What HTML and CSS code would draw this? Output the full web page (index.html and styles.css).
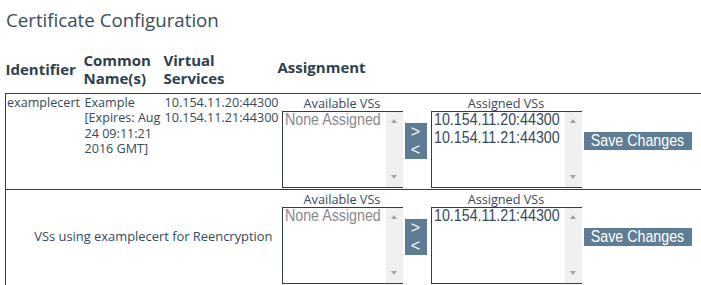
FILE: index.html
```html
<!DOCTYPE html>
<html>
<head>
<meta charset="utf-8">
<link rel="stylesheet" href="styles.css">
</head>
<body>
<div class="page">
  <h1 class="title">Certificate Configuration</h1>
  <table class="certs">
    <colgroup>
      <col class="c-id">
      <col class="c-cn">
      <col class="c-vs">
      <col class="c-as">
    </colgroup>
    <thead>
      <tr>
        <th>Identifier</th>
        <th>Common<br>Name(s)</th>
        <th>Virtual<br>Services</th>
        <th class="th-assign">Assignment</th>
      </tr>
    </thead>
    <tbody>
      <tr>
        <td class="first">examplecert</td>
        <td>Example<br>[Expires: Aug 24 09:11:21 2016 GMT]</td>
        <td>10.154.11.20:44300<br>10.154.11.21:44300</td>
        <td class="assign">
          <div class="assign-row">
            <div class="pick pick-avail">
              <div class="pick-label">Available VSs</div>
              <div class="listbox">
                <div class="options"><div class="opt opt-empty"><span class="opt-text">None Assigned</span></div></div>
                <div class="scrollbar"><span class="arr-up"></span><span class="arr-down"></span></div>
              </div>
            </div>
            <div class="movers">
              <button class="mover">&gt;</button>
              <button class="mover">&lt;</button>
            </div>
            <div class="pick pick-assigned">
              <div class="pick-label">Assigned VSs</div>
              <div class="listbox">
                <div class="options">
                  <div class="opt"><span class="opt-text">10.154.11.20:44300</span></div>
                  <div class="opt"><span class="opt-text">10.154.11.21:44300</span></div>
                </div>
                <div class="scrollbar"><span class="arr-up"></span><span class="arr-down"></span></div>
              </div>
            </div>
            <button class="save"><span class="save-text">Save Changes</span></button>
          </div>
        </td>
      </tr>
      <tr>
        <td colspan="3" class="first reenc">VSs using examplecert for Reencryption</td>
        <td class="assign">
          <div class="assign-row">
            <div class="pick pick-avail">
              <div class="pick-label">Available VSs</div>
              <div class="listbox">
                <div class="options"><div class="opt opt-empty"><span class="opt-text">None Assigned</span></div></div>
                <div class="scrollbar"><span class="arr-up"></span><span class="arr-down"></span></div>
              </div>
            </div>
            <div class="movers">
              <button class="mover">&gt;</button>
              <button class="mover">&lt;</button>
            </div>
            <div class="pick pick-assigned">
              <div class="pick-label">Assigned VSs</div>
              <div class="listbox">
                <div class="options">
                  <div class="opt"><span class="opt-text">10.154.11.21:44300</span></div>
                </div>
                <div class="scrollbar"><span class="arr-up"></span><span class="arr-down"></span></div>
              </div>
            </div>
            <button class="save"><span class="save-text">Save Changes</span></button>
          </div>
        </td>
      </tr>
    </tbody>
  </table>
</div>
</body>
</html>
```
FILE: styles.css
```css
html, body {
  margin: 0;
  padding: 0;
  background: #ffffff;
  overflow: hidden;
}
body {
  font-family: "Open Sans", "Noto Sans", sans-serif;
  color: #34495e;
}
.page {
  padding: 0 0 0 5px;
}
.title {
  margin: 0;
  padding: 8px 0 0 1px;
  height: 24px;
  font-size: 18.7px;
  line-height: 24px;
  font-weight: normal;
  color: #3b4b5c;
}
.certs {
  width: 100%;
  border-collapse: collapse;
  table-layout: fixed;
}
.c-id { width: 78px; }
.c-cn { width: 80px; }
.c-vs { width: 114px; }
.certs thead tr {
  height: 61px;
}
.certs thead th {
  text-align: left;
  vertical-align: middle;
  font-size: 15px;
  line-height: 18px;
  font-weight: bold;
  color: #2f3e4e;
  padding: 14px 0 0 0;
  white-space: nowrap;
}
.certs thead th.th-assign {
  padding-left: 0;
  padding-bottom: 5px;
}
.certs tbody tr {
  border-top: 1px solid #2f3e4e;
}
.certs tbody td {
  vertical-align: top;
  font-size: 12.6px;
  line-height: 15.5px;
  padding: 1px 0 1px 1px;
  color: #34495e;
}
.certs tbody td.first {
  border-left: 1px solid #2f3e4e;
}
.certs tbody td.reenc {
  text-align: right;
  vertical-align: middle;
  font-size: 12.9px;
  padding-right: 5px;
  padding-top: 1px;
}
.certs tbody td.assign {
  padding: 1px 0 1px 4px;
}
.assign-row {
  display: flex;
  align-items: center;
}
.pick {
  display: flex;
  flex-direction: column;
}
.pick-avail { width: 121px; }
.pick-assigned { width: 151px; margin-left: 4px; }
.pick-label {
  text-align: center;
  font-size: 12.7px;
  line-height: 16px;
  height: 16px;
  color: #34495e;
}
.listbox {
  display: flex;
  height: 77px;
  box-sizing: border-box;
  border: 1px solid #2f3e4e;
  border-right: none;
  background: #ffffff;
}
.options {
  flex: 1;
  margin-top: -1px;
  padding: 0 0 0 2px;
  font-family: "Liberation Sans", Arial, sans-serif;
  font-size: 16px;
  line-height: 18.6px;
  color: #34495e;
  white-space: nowrap;
  overflow: hidden;
}
.opt-text {
  display: inline-block;
  transform: scaleX(0.89);
  transform-origin: left center;
}
.opt-empty {
  color: #8a8a8a;
}
.scrollbar {
  width: 17px;
  background: #f0f0f0;
  display: flex;
  flex-direction: column;
  justify-content: space-between;
  align-items: center;
  padding: 7px 0 8px;
  box-sizing: border-box;
}
.arr-up, .arr-down {
  width: 0;
  height: 0;
  border-left: 3.5px solid transparent;
  border-right: 3.5px solid transparent;
}
.arr-up { border-bottom: 4px solid #a3a3a3; }
.arr-down { border-top: 4px solid #a3a3a3; }
.movers {
  display: flex;
  flex-direction: column;
  margin-left: 2px;
}
.mover {
  width: 22px;
  height: 18px;
  margin: 0;
  padding: 0;
  border: none;
  background: #5f7c95;
  color: #ffffff;
  font-family: "Liberation Sans", Arial, sans-serif;
  font-size: 16px;
  line-height: 18px;
}
.save {
  margin: 0 0 0 2px;
  width: 108px;
  height: 18px;
  padding: 0;
  border: none;
  background: #5f7c95;
  color: #ffffff;
  font-family: "Liberation Sans", Arial, sans-serif;
  font-size: 16px;
  line-height: 18px;
  white-space: nowrap;
  overflow: hidden;
  text-align: center;
}
.save-text {
  display: inline-block;
  transform: scaleX(0.89);
  transform-origin: center center;
}
```
